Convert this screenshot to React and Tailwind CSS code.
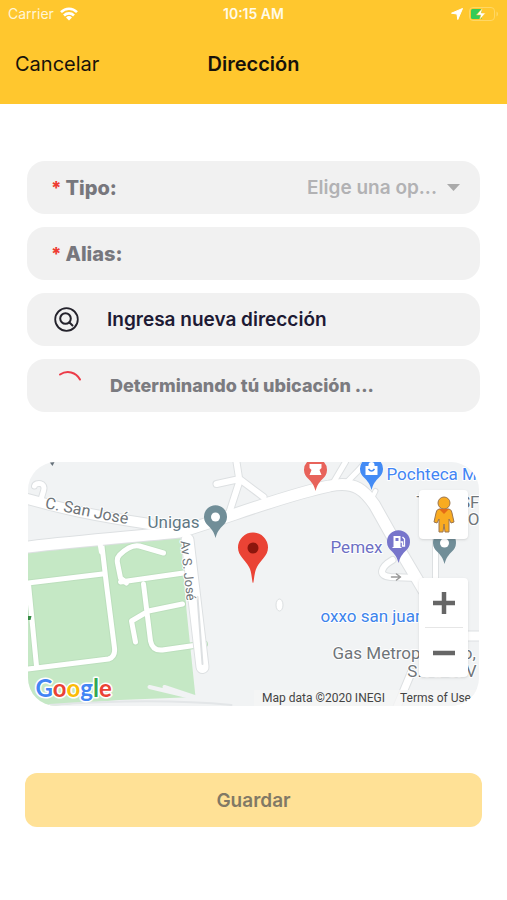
import React from "react";

const row = "flex h-[53px] w-full items-center rounded-[18px] bg-[#f1f1f1]";

function StatusBar() {
  return (
    <div className="grid h-7 grid-cols-3 items-center px-2 text-sm text-white">
      <div className="flex items-center gap-1.5 text-[#fff5d6]">
        <span>Carrier</span>
        <svg width="18" height="14" viewBox="0 0 18 14" role="img" aria-label="Wi-Fi">
          <g fill="none" stroke="#fff" strokeWidth="2.6">
            <path d="M1 5.2C5.600.6 12.400.6 17 5.200" />
            <path d="M4 8.500C6.800 5.700 11.200 5.700 14 8.500" />
          </g>
          <path d="M9 13.500 6 10.500a4.300 4.300 0 0 1 6 0Z" fill="#fff" />
        </svg>
      </div>
      <span className="text-center font-semibold text-[#fffbe8]">10:15 AM</span>
      <div className="flex items-center justify-end gap-1.5">
        <svg width="12" height="12" viewBox="0 0 12 12" role="img" aria-label="Ubicación">
          <path d="M11.500.5 6.800 11.500 6 6 .5 5.200Z" fill="#fff" stroke="#fff" strokeLinejoin="round" />
        </svg>
        <svg width="30" height="14" viewBox="0 0 30 14" role="img" aria-label="Batería">
          <rect x=".5" y=".5" width="25" height="13" rx="3.500" fill="none" stroke="#ffd765" />
          <rect x="2" y="2" width="11" height="10" rx="1.500" fill="#35cb58" />
          <path d="M27.500 4.500c2 .8 2 4.200 0 5Z" fill="#ffd765" />
          <path d="M13.500 1 7.500 8h4.200L10.500 13l6-7h-4.200Z" fill="#fff" stroke="#ffc72e" strokeWidth=".6" />
        </svg>
      </div>
    </div>
  );
}

function Pin({ x, y, color, children }) {
  return (
    <g transform={`translate(${x} ${y})`}>
      <path
        d="M0 21C-1.500 15-4 12-7.500 8.500A11.500 11.500 0 1 1 7.500 8.500C4 12 1.500 15 0 21Z"
        fill={color}
      />
      {children}
    </g>
  );
}

const roads = [
  ["M28 499C65 509 90 515 150 524", 10],
  ["M28 547C80 541 130 537 180 532C225 519 285 495 330 486C356 480 366 492 375 505L398 546L424 590", 11],
  ["M35 486C36 482 47 482 44 491L41 501", 5],
  ["M237 462L240 481L230 512M217 484L240 479L264 497", 6],
  ["M333 484L346 462M345 485C354 475 361 469 366 462", 5],
  ["M373 497L376 491", 4],
  ["M393 560C381 567 378 576 391 577L418 578", 6],
  ["M436 540V580", 5],
  ["M460 636H484", 9],
  ["M412 672L397 708", 7],
];

const parkRoads =
  "M102 542L107 585L115 648Q116 657 109 659L28 669M28 583L103 574M29 584L37 666M164 553L140 546Q131 544 120 555Q117 558 118 563L121 578L127 583M121 582L184 573M144 584L151 641Q153 651 163 650L205 644M183 604L149 611L132 621L136 642";

function MapDrawing() {
  const halo = { stroke: "#fff", strokeWidth: 2, paintOrder: "stroke", strokeLinejoin: "round" };
  return (
    <svg
      className="block h-full w-full font-[Roboto,sans-serif]"
      viewBox="28 462 452 244"
      preserveAspectRatio="xMidYMid slice"
      role="img"
      aria-label="Mapa de la ubicación"
    >
      <rect x="28" y="462" width="452" height="244" fill="#f1f3f4" />
      <path d="M28 552L100 544L181 537L187 610L196 697L120 700L50 706H28Z" fill="#c5e8c5" />
      <g fill="none" strokeLinecap="round" strokeLinejoin="round">
        <path d={parkRoads} stroke="#bcdfbd" strokeWidth="7" />
        <path d={parkRoads} stroke="#fff" strokeWidth="5" />
        <path d="M188 540L203 667" stroke="#dde0e2" strokeWidth="14" />
        {roads.map(([d, w]) => (
          <path key={d} d={d} stroke="#dde0e2" strokeWidth={w + 2} />
        ))}
        <path d="M188 540L203 667" stroke="#fff" strokeWidth="12" />
        {roads.map(([d, w]) => (
          <path key={d} d={d} stroke="#fff" strokeWidth={w} />
        ))}
        <path d="M100 541L102 552" stroke="#fff" strokeWidth="5" />
        <path d="M198 597L203 664" stroke="#dde0e2" strokeWidth="2" />
        <path d="M150 687L196 698M165 687L198 698" stroke="#f1f3f4" strokeWidth="4" />
        <path d="M50 705C120 700 180 700 232 705" stroke="#e3e6e8" strokeWidth="2" />
        <path d="M392 577h9m-4-3 4 3-4 3" stroke="#999" strokeWidth="1.500" />
      </g>
      <ellipse cx="280" cy="605" rx="3.500" ry="6" fill="#fff" stroke="#dcdfe1" />
      <path d="M50 462h5l-2 4Z" fill="#66717a" />
      <path d="M28 616h4l-1 4h-3Z" fill="#348a42" />

      <g fontSize="17" fill="#6f7579" {...halo}>
        <text fontSize="16" transform="translate(45 508) rotate(11)">C. San José</text>
        <text x="148" y="528" fill="#5f7884">Unigas</text>
        <text fontSize="13" transform="translate(181 541) rotate(84)">Av S. José</text>
        <text x="387" y="480" fill="#4285f4">Pochteca M.</text>
        <text x="331" y="553" fill="#6d6fc4">Pemex</text>
        <text x="321" y="622" fill="#3d84ec">oxxo san juan</text>
        <text x="333" y="659">Gas Metropolitano,</text>
        <text x="477" y="677" textAnchor="end">S. A. C. V</text>
        <text x="480" y="508" textAnchor="end">TRANSF</text>
        <text x="480" y="525" textAnchor="end">O</text>
      </g>

      <Pin x={216} y={517} color="#718e98">
        <circle r="4.500" fill="#fff" />
      </Pin>
      <Pin x={445} y={543} color="#718e98">
        <circle r="4.500" fill="#fff" />
      </Pin>
      <Pin x={316} y={470} color="#e8635b">
        <path d="M-6-6H6V-2L4 0 6 5H-6L-4 0-6-2Z" fill="#fff" />
      </Pin>
      <Pin x={372} y={469} color="#438bf5">
        <path d="M-6-3H-3V-4A3 3 0 0 1 3-4V-3H6V6H-6Z" fill="#fff" />
        <path d="M-3 0Q0 4 3 0" fill="none" stroke="#438bf5" strokeWidth="1.500" />
      </Pin>
      <Pin x={399} y={542} color="#7775cb">
        <path d="M-5-6H2V5H3V6H-6V5H-5Z" fill="#fff" />
        <path d="M-3-4H0V-1H-3Z" fill="#7775cb" />
        <path d="M2 0H4V4H6V-3L4-5" fill="none" stroke="#fff" strokeWidth="1.300" />
      </Pin>

      <path
        d="M253.500 583C252.500 583 252.500 572 249.500 567C246 560 238.500 556 238.500 547.500A15 15 0 1 1 268.500 547.500C268.500 556 261 560 257.500 567C254.500 572 254.500 583 253.500 583Z"
        fill="#ea4335"
      />
      <circle cx="253.500" cy="548" r="5.500" fill="#8c160d" />

      <text
        x="36"
        y="697"
        className="font-[Lato,sans-serif]"
        fontSize="24"
        fontWeight="700"
        stroke="#fff"
        strokeWidth="3"
        strokeLinejoin="round"
        paintOrder="stroke"
      >
        <tspan fill="#4285f4">G</tspan>
        <tspan fill="#ea4335">o</tspan>
        <tspan fill="#fbbc05">o</tspan>
        <tspan fill="#4285f4">g</tspan>
        <tspan fill="#34a853">l</tspan>
        <tspan fill="#ea4335">e</tspan>
      </text>
    </svg>
  );
}

function LocationMap() {
  return (
    <section className="relative mx-[28px] mt-[50px] h-[244px] overflow-hidden rounded-[28px]" aria-label="Mapa">
      <MapDrawing />
      <div className="absolute right-[11px] top-[28px] flex flex-col gap-[39px]">
        <button type="button" aria-label="Street View" className="flex h-[49px] w-[49px] items-center justify-center rounded-sm bg-white shadow">
          <svg width="24" height="40" viewBox="0 0 24 40" aria-hidden="true">
            <g fill="#f9ab20" stroke="#9b7650" strokeWidth="1">
              <path d="M7 14H17Q20 15 20 18L22 27 19 28 17 24V37H13L12 29 11 37H7V24L5 28 2 27 4 18Q4 15 7 14Z" />
              <circle cx="12" cy="8" r="6" />
            </g>
            <path d="M7 14H17L12 19Z" fill="#e56b16" />
          </svg>
        </button>
        <div className="flex h-[99px] w-[49px] flex-col items-center rounded-sm bg-white shadow">
          <button type="button" aria-label="Acercar" className="flex w-full flex-1 items-center justify-center">
            <svg width="22" height="22" viewBox="0 0 22 22" aria-hidden="true">
              <path d="M11 0V22M0 11H22" stroke="#666" strokeWidth="4.500" />
            </svg>
          </button>
          <span className="h-px w-[38px] bg-[#e6e6e6]" />
          <button type="button" aria-label="Alejar" className="flex w-full flex-1 items-center justify-center">
            <svg width="22" height="22" viewBox="0 0 22 22" aria-hidden="true">
              <path d="M0 11H22" stroke="#666" strokeWidth="4.500" />
            </svg>
          </button>
        </div>
      </div>
      <div className="absolute bottom-0 right-0 flex h-4 items-center gap-[15px] bg-[#f5f5f5]/80 pl-2 pr-[8px] font-[Roboto,sans-serif] text-xs text-[#444]">
        <span>Map data ©2020 INEGI</span>
        <a href="#terms">Terms of Use</a>
      </div>
    </section>
  );
}

export default function App() {
  return (
    <div className="min-h-screen bg-white font-[Inter,sans-serif]">
      <header className="bg-[#ffc72e]">
        <StatusBar />
        <div className="grid h-[76px] grid-cols-3 items-center px-[15px] pb-1 text-xl text-[#17120a]">
          <button type="button" className="justify-self-start">Cancelar</button>
          <h1 className="text-center font-semibold">Dirección</h1>
        </div>
      </header>

      <main>
        <form onSubmit={(e) => e.preventDefault()}>
          <div className="mx-[27px] mt-[57px] flex flex-col gap-[13px]">
            <div className={`${row} relative pl-6 pr-[18px]`}>
              <label htmlFor="tipo" className="flex items-center gap-1 text-xl font-extrabold text-[#77777d]">
                <span className="text-lg text-[#ee3b32]">*</span> Tipo:
              </label>
              <select
                id="tipo"
                className="ml-auto h-full min-w-0 flex-1 appearance-none bg-transparent pr-[25px] pt-0.5 text-right text-[19px] font-semibold text-[#b2b2b4] outline-none [text-align-last:right]"
              >
                <option>Elige una op...</option>
              </select>
              <svg className="pointer-events-none absolute right-[20px]" width="13" height="7" viewBox="0 0 13 7" aria-hidden="true">
                <path d="M0 0H13L6.500 7Z" fill="#aaa" />
              </svg>
            </div>
            <div className={`${row} px-6`}>
              <label htmlFor="alias" className="flex items-center gap-1 text-xl font-extrabold text-[#77777d]">
                <span className="text-lg text-[#ee3b32]">*</span> Alias:
              </label>
              <input id="alias" type="text" className="ml-3 h-full min-w-0 flex-1 bg-transparent text-xl outline-none" />
            </div>
            <button type="button" className={`${row} gap-[28px] px-[27px] text-[19px] font-semibold text-[#1d1a34]`}>
              <svg width="25" height="25" viewBox="0 0 25 25" fill="none" stroke="#24232c" strokeLinecap="round" aria-hidden="true">
                <circle cx="12.500" cy="12.500" r="11.300" strokeWidth="1.800" />
                <circle cx="11.500" cy="11.500" r="5.300" strokeWidth="2" />
                <path d="m15.500 15.500 3 3" strokeWidth="2" />
              </svg>
              <span className="pt-0.5">Ingresa nueva dirección</span>
            </button>
            <div role="status" className={`${row} gap-[28px] px-[31px] text-lg font-extrabold text-[#7b7b80]`}>
              <svg width="24" height="34" viewBox="0 0 24 34" fill="none" aria-hidden="true">
                <path d="M2 5.500C9 1 18 3 22 10.500" stroke="#ec3b48" strokeWidth="2" strokeLinecap="round" />
              </svg>
              Determinando tú ubicación ...
            </div>
          </div>

          <LocationMap />

          <div className="px-[25px] pt-[67px]">
            <button type="submit" className="h-[54px] w-full rounded-xl bg-[#ffe196] pt-0.5 text-[19px] font-semibold text-[#817965]">
              Guardar
            </button>
          </div>
        </form>
      </main>
    </div>
  );
}
